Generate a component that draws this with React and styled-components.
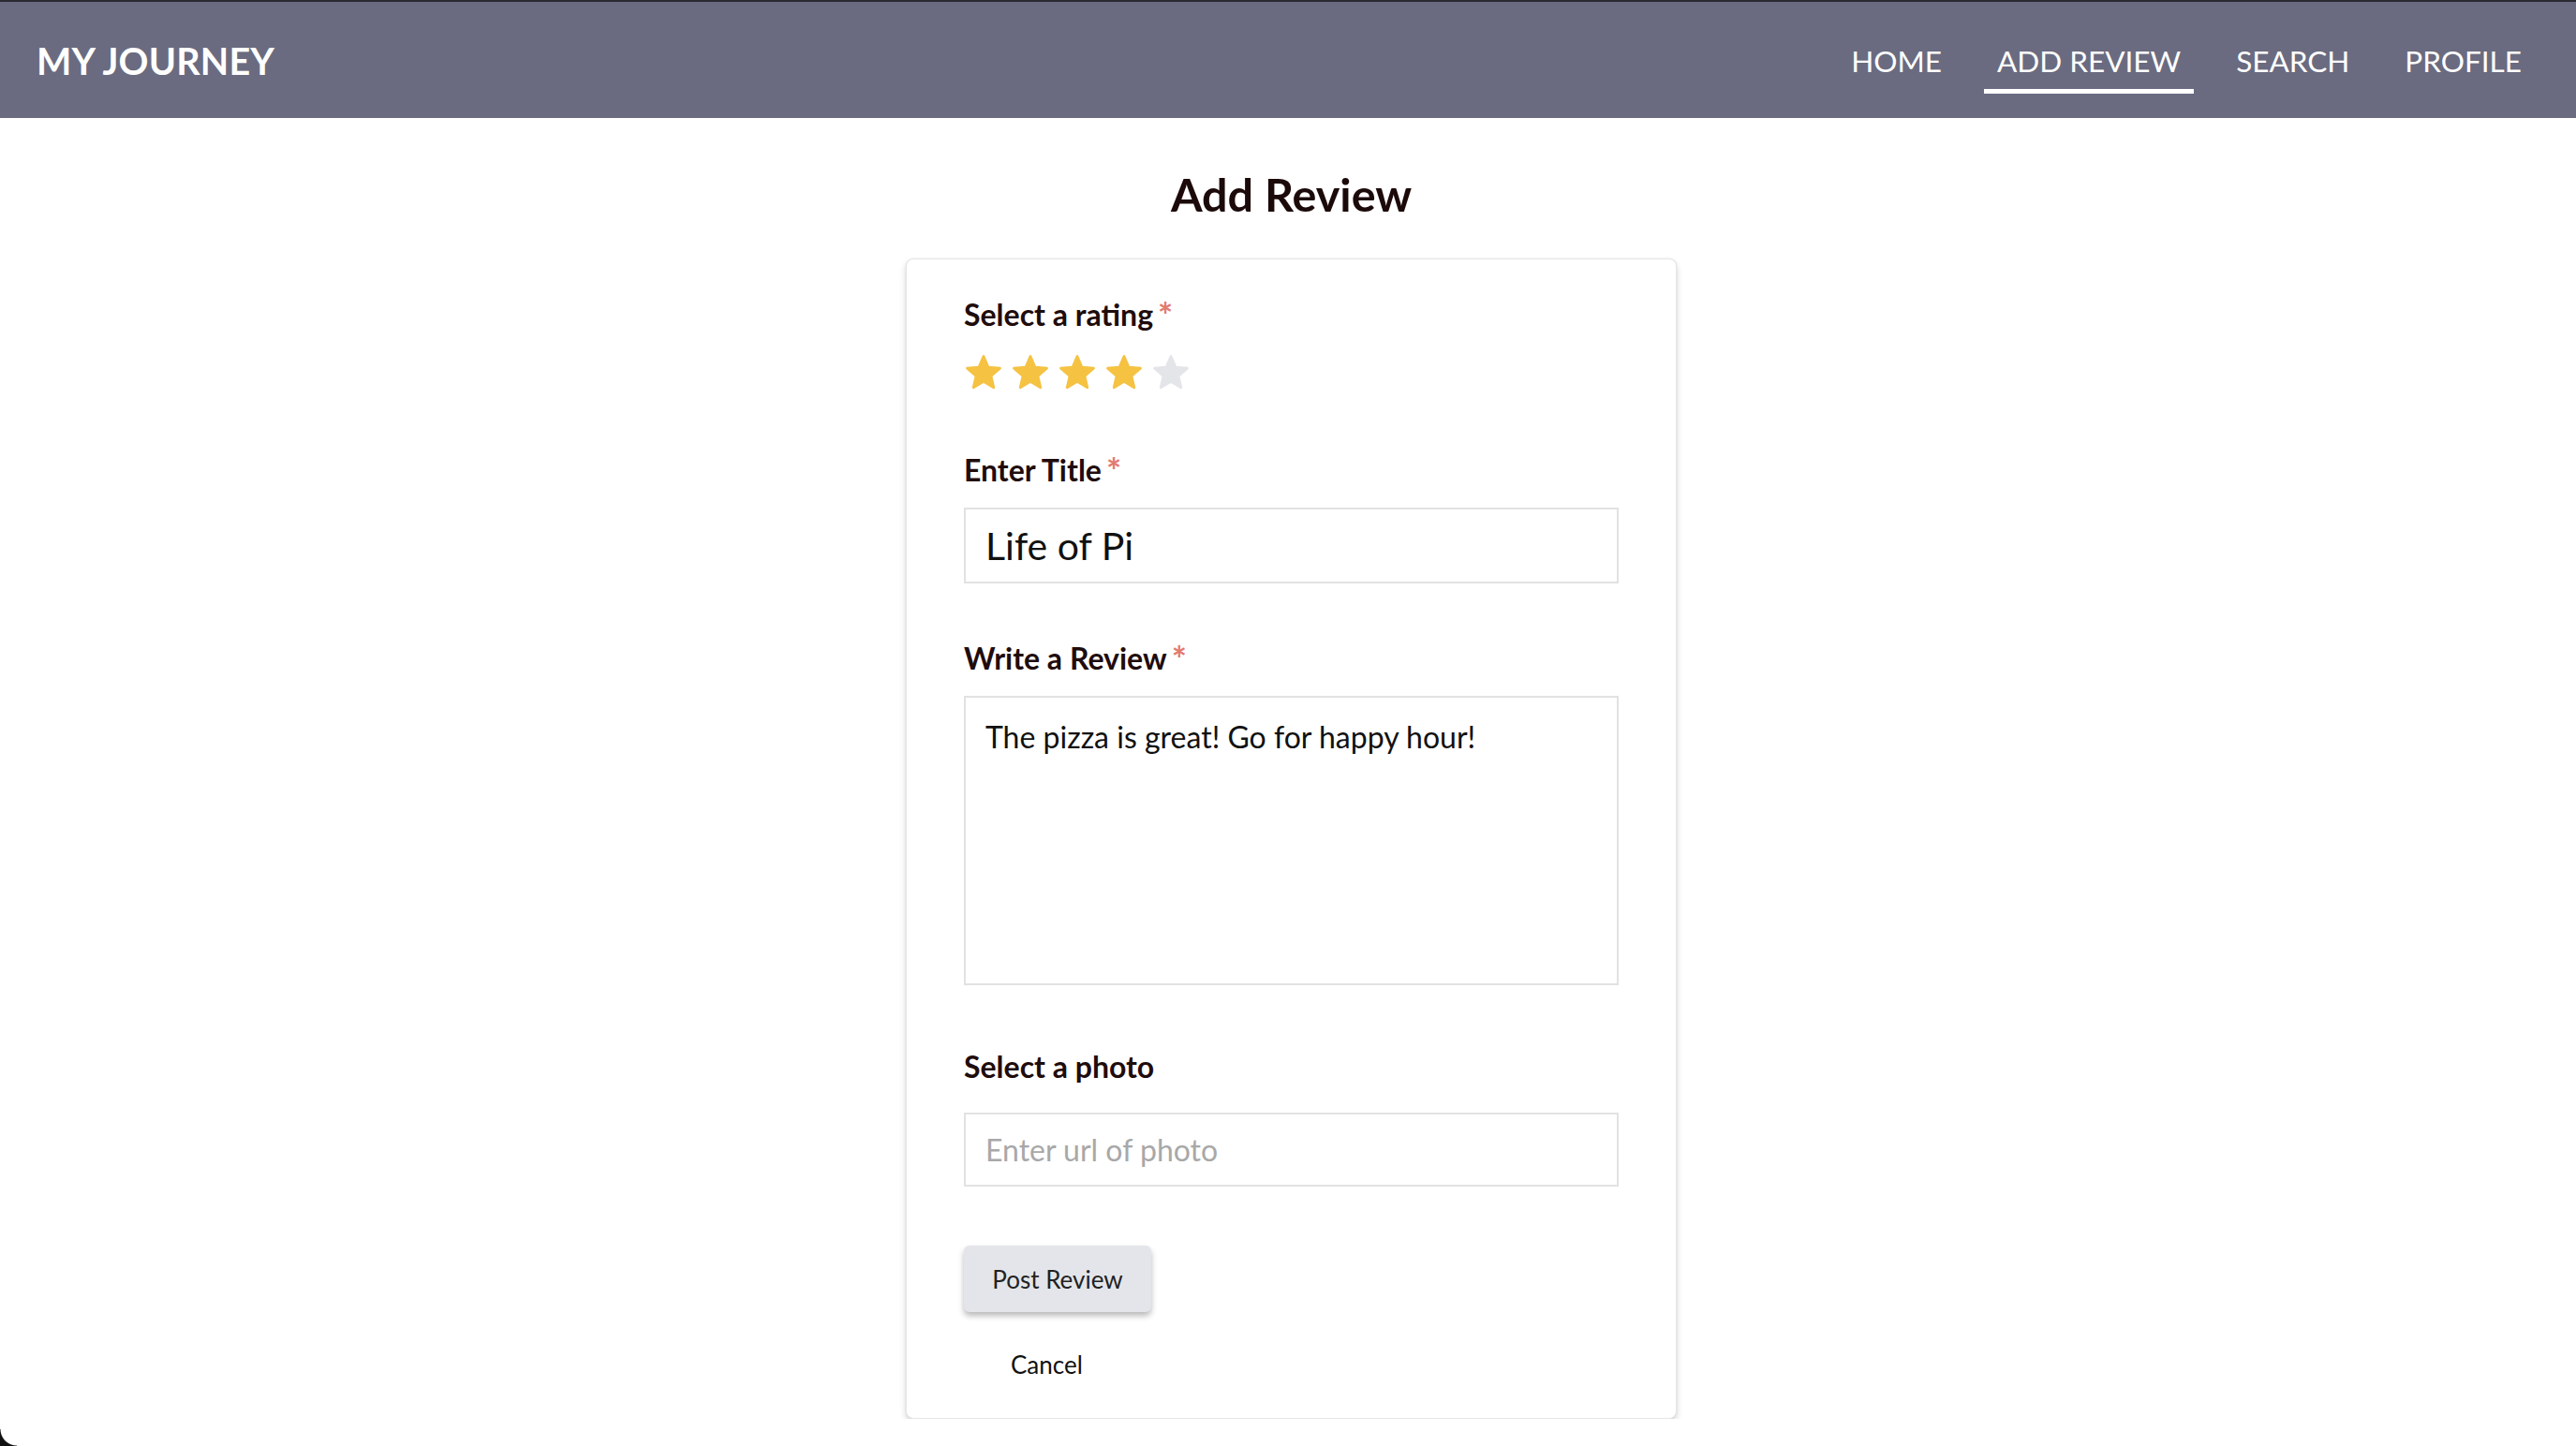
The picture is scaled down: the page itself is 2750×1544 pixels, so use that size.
import React from "react";
import styled, { createGlobalStyle } from "styled-components";

const GlobalStyle = createGlobalStyle`
  body {
    margin: 0;
    background: #ffffff;
    font-family: Lato, "Open Sans", sans-serif;
    color: #1f0c0c;
  }
  * {
    box-sizing: border-box;
  }
`;

const Header = styled.header`
  height: 126px;
  background: #6a6b80;
  border-top: 2px solid #2a2a33;
  display: flex;
  align-items: center;
  justify-content: space-between;
  padding: 0 44px 0 39px;
`;

const Logo = styled.div`
  color: #ffffff;
  font-size: 39.5px;
  font-weight: 700;
  letter-spacing: 0.2px;
`;

const Nav = styled.nav`
  display: flex;
  align-items: center;
  gap: 31px;
`;

const NavLink = styled.a`
  color: #ffffff;
  font-size: 31.5px;
  line-height: 36px;
  padding: 19px 14px 12px;
  border-bottom: 5px solid ${(p) => (p.$active ? "#ffffff" : "transparent")};
  cursor: pointer;
`;

const Main = styled.main`
  display: flex;
  flex-direction: column;
  align-items: center;
  padding-left: 7px;
`;

const PageTitle = styled.h1`
  margin: 52px 0 40px;
  font-size: 48.5px;
  line-height: 58px;
  font-weight: 700;
  color: #1c0a0a;
`;

const Card = styled.section`
  width: 823px;
  background: #ffffff;
  border: 1px solid #e6e6e6;
  border-radius: 8px;
  box-shadow: 0 4px 7px rgba(0, 0, 0, 0.16), 0 0 2px rgba(0, 0, 0, 0.08);
  padding: 39px 61px 41px;
  display: flex;
  flex-direction: column;
`;

const Field = styled.div`
  display: flex;
  flex-direction: column;
  margin-bottom: ${(p) => p.$after}px;
`;

const Label = styled.label`
  font-size: 32px;
  line-height: 40px;
  font-weight: 700;
  color: #1f0c0c;
  margin-bottom: ${(p) => p.$gap || 20}px;
`;

const Required = styled.span`
  color: #e27a70;
  font-size: 38px;
  line-height: 38px;
  font-weight: 700;
  vertical-align: top;
  margin-left: 5px;
  position: relative;
  top: 1px;
`;

const Stars = styled.div`
  display: flex;
  gap: 8px;
  height: 40px;
  align-items: center;
  margin-top: 2px;
`;

const TextInput = styled.input`
  width: 100%;
  height: ${(p) => p.$h}px;
  border: 2px solid #e2e2e2;
  padding: 0 21px;
  font-family: Lato, sans-serif;
  font-size: ${(p) => p.$size}px;
  color: #111111;
  outline: none;
  &::placeholder {
    color: #a8a8a8;
  }
`;

const TextArea = styled.textarea`
  width: 100%;
  height: 309px;
  border: 2px solid #e2e2e2;
  padding: 22px 21px;
  font-family: Lato, sans-serif;
  font-size: 32px;
  line-height: 40px;
  color: #111111;
  resize: none;
  outline: none;
`;

const Actions = styled.div`
  display: flex;
  flex-direction: column;
  align-items: flex-start;
  gap: 40px;
`;

const PostButton = styled.button`
  width: 200px;
  height: 71px;
  border: none;
  border-radius: 6px;
  background: #e4e5ea;
  box-shadow: 0 4px 6px rgba(0, 0, 0, 0.28);
  font-family: Lato, sans-serif;
  font-size: 26px;
  color: #222222;
  cursor: pointer;
`;

const CancelButton = styled.button`
  border: none;
  background: transparent;
  padding: 0 0 0 50px;
  font-family: Lato, sans-serif;
  font-size: 26px;
  line-height: 32px;
  color: #111111;
  cursor: pointer;
`;

const Corner = styled.div`
  position: fixed;
  left: 0;
  bottom: 0;
  width: 18px;
  height: 18px;
  background: radial-gradient(circle at 100% 0, transparent 17px, #111 18px);
`;

const Star = ({ on }) => {
  const c = on ? "#f5c242" : "#e4e5e9";
  return (
    <svg width="42" height="42" viewBox="0 0 24 24">
      <path
        d="M12 17.27L18.18 21l-1.64-7.03L22 9.24l-7.19-.61L12 2 9.19 8.63 2 9.24l5.46 4.73L5.82 21z"
        fill={c}
        stroke={c}
        strokeWidth="1.6"
        strokeLinejoin="round"
      />
    </svg>
  );
};

const App = () => {
  const rating = 4;
  return (
    <>
      <GlobalStyle />
      <Header>
        <Logo>MY JOURNEY</Logo>
        <Nav>
          <NavLink>HOME</NavLink>
          <NavLink $active>ADD REVIEW</NavLink>
          <NavLink>SEARCH</NavLink>
          <NavLink>PROFILE</NavLink>
        </Nav>
      </Header>
      <Main>
        <PageTitle>Add Review</PageTitle>
        <Card>
          <Field $after={64}>
            <Label>
              Select a rating<Required>*</Required>
            </Label>
            <Stars>
              {[1, 2, 3, 4, 5].map((n) => (
                <Star key={n} on={n <= rating} />
              ))}
            </Stars>
          </Field>
          <Field $after={60}>
            <Label>
              Enter Title<Required>*</Required>
            </Label>
            <TextInput $h={81} $size={41} defaultValue="Life of Pi" />
          </Field>
          <Field $after={67}>
            <Label>
              Write a Review<Required>*</Required>
            </Label>
            <TextArea defaultValue="The pizza is great! Go for happy hour!" />
          </Field>
          <Field $after={63}>
            <Label $gap={29}>Select a photo</Label>
            <TextInput $h={79} $size={32} placeholder="Enter url of photo" />
          </Field>
          <Actions>
            <PostButton>Post Review</PostButton>
            <CancelButton>Cancel</CancelButton>
          </Actions>
        </Card>
      </Main>
      <Corner />
    </>
  );
};

export default App;
